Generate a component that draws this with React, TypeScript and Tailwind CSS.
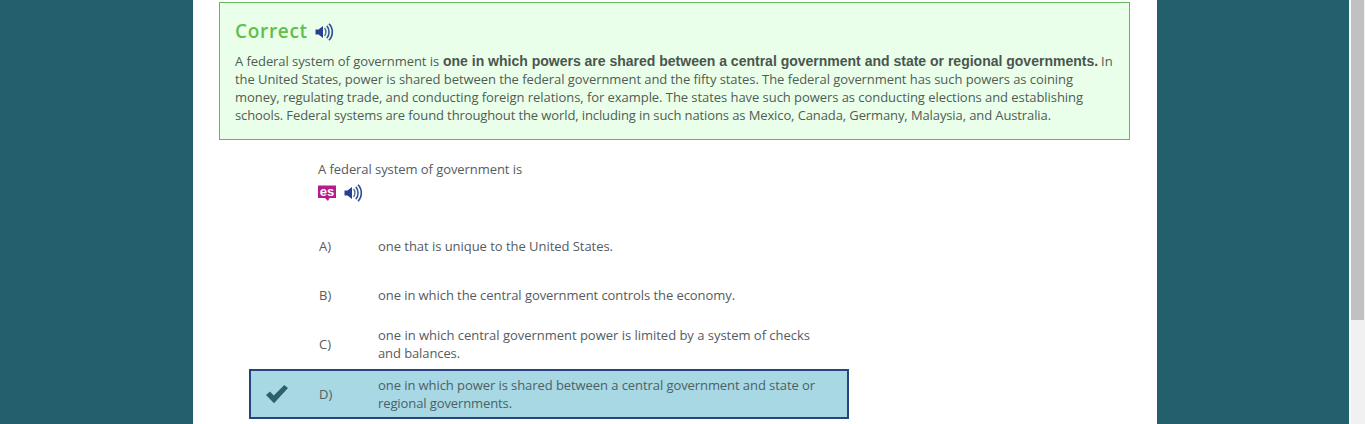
import React from 'react';

const answers = [
  {
    letter: 'A',
    correct: false,
    lines: [{ text: 'one that is unique to the United States.', tracking: 'tracking-[-0.041px]' }],
  },
  {
    letter: 'B',
    correct: false,
    lines: [{ text: 'one in which the central government controls the economy.', tracking: 'tracking-[-0.069px]' }],
  },
  {
    letter: 'C',
    correct: false,
    lines: [
      { text: 'one in which central government power is limited by a system of checks', tracking: 'tracking-[-0.021px]' },
      { text: 'and balances.', tracking: 'tracking-[-0.1px]' },
    ],
  },
  {
    letter: 'D',
    correct: true,
    lines: [
      { text: 'one in which power is shared between a central government and state or', tracking: 'tracking-[-0.074px]' },
      { text: 'regional governments.', tracking: 'tracking-[-0.102px]' },
    ],
  },
];

const SpeakerIcon = () => (
  <svg width="19" height="20" viewBox="0 0 19 20" fill="none" className="shrink-0">
    <path d="M0.5 7.5h3l4.5-3.6v12.2l-4.5-3.6h-3z" fill="#26418f" />
    <path d="M9.5 6c1.9 2.1 1.9 5.9 0 8" stroke="#4f6aa5" strokeWidth="1.4" />
    <path d="M11.8 3.9c3 3.2 3 9 0 12.2" stroke="#3a579b" strokeWidth="1.6" />
    <path d="M14 1.8c4.4 4.4 4.4 12 0 16.4" stroke="#2f4d97" strokeWidth="1.6" />
  </svg>
);

const SpanishIcon = () => (
  <svg width="18" height="16" viewBox="0 0 18 16" className="shrink-0 overflow-visible">
    <path d="M0 0.5h18v12.5h-6.5L10 16l-3-3H0z" fill="#b8198b" />
    <text x="9" y="10.5" textAnchor="middle" fill="#fff" fontSize="13" fontWeight="bold" fontFamily="Liberation Sans, sans-serif">
      es
    </text>
  </svg>
);

const CheckIcon = () => (
  <svg width="22" height="20" viewBox="0 0 22 20">
    <path d="M0 11l4-3.6 3.7 4.2L18.3 1 22 4 8 19.2z" fill="#2b6269" />
  </svg>
);

const App = () => {
  return (
    <div className="flex h-[424px] overflow-hidden bg-[#245f6d] font-['Open_Sans',sans-serif] text-[13px] leading-[18px] text-[#565b5f]">
      <div className="flex flex-1 justify-center">
        <main className="mr-[-1px] w-[964px] bg-white px-[26px] pt-[2px]">
          {/* Feedback */}
          <section className="h-[138px] w-[911px] border border-[#63b758] bg-[#eaffea] pt-[14px] pl-[15px] text-[#505c54]">
            <div className="flex h-[29px] items-center">
              <h1 className="w-[80px] pb-[2px] text-[19px] leading-[28px] font-semibold tracking-[0.7px] text-[#62be4a]">Correct</h1>
              <SpeakerIcon />
            </div>
            <div className="mt-[6px] whitespace-nowrap">
              <div className="flex">
                <span className="w-[208px] tracking-[-0.069px]">A federal system of government is</span>
                <strong className="w-[658px] font-['Liberation_Sans',sans-serif] text-sm leading-[18px] text-[#4a554f]">
                  one in which powers are shared between a central government and state or regional governments.
                </strong>
                <span>In</span>
              </div>
              <p className="tracking-[-0.068px]">
                the United States, power is shared between the federal government and the fifty states. The federal government has such powers as coining
              </p>
              <p className="tracking-[-0.057px]">
                money, regulating trade, and conducting foreign relations, for example. The states have such powers as conducting elections and establishing
              </p>
              <p className="tracking-[-0.108px]">
                schools. Federal systems are found throughout the world, including in such nations as Mexico, Canada, Germany, Malaysia, and Australia.
              </p>
            </div>
          </section>

          {/* Question */}
          <section className="mt-[20px] ml-[99px] h-[62px]">
            <p className="tracking-[-0.069px]">A federal system of government is</p>
            <div className="mt-[5px] flex items-center gap-[8px]">
              <SpanishIcon />
              <SpeakerIcon />
            </div>
          </section>

          {/* Answers */}
          <ul className="ml-[30px] w-[600px]">
            {answers.map(answer => (
              <li
                key={answer.letter}
                className={
                  answer.correct
                    ? 'flex h-[50px] items-center border-2 border-[#264580] bg-[#a8d8e3] text-[#4c6067]'
                    : 'flex h-[49px] items-center border-x-2 border-transparent pb-[2px]'
                }
              >
                <div className="flex w-[68px] pl-[15px]">{answer.correct && <CheckIcon />}</div>
                <div className="w-[59px]">{answer.letter})</div>
                <div className="whitespace-nowrap">
                  {answer.lines.map(line => (
                    <p key={line.text} className={line.tracking}>{line.text}</p>
                  ))}
                </div>
              </li>
            ))}
          </ul>
        </main>
      </div>

      {/* Scrollbar */}
      <div className="w-4 border-l-2 border-[#f4fbfc] bg-[#f1f1f1]">
        <div className="h-[320px] w-[13px] bg-[#c1c1c1]"></div>
      </div>
    </div>
  );
};

export default App;
